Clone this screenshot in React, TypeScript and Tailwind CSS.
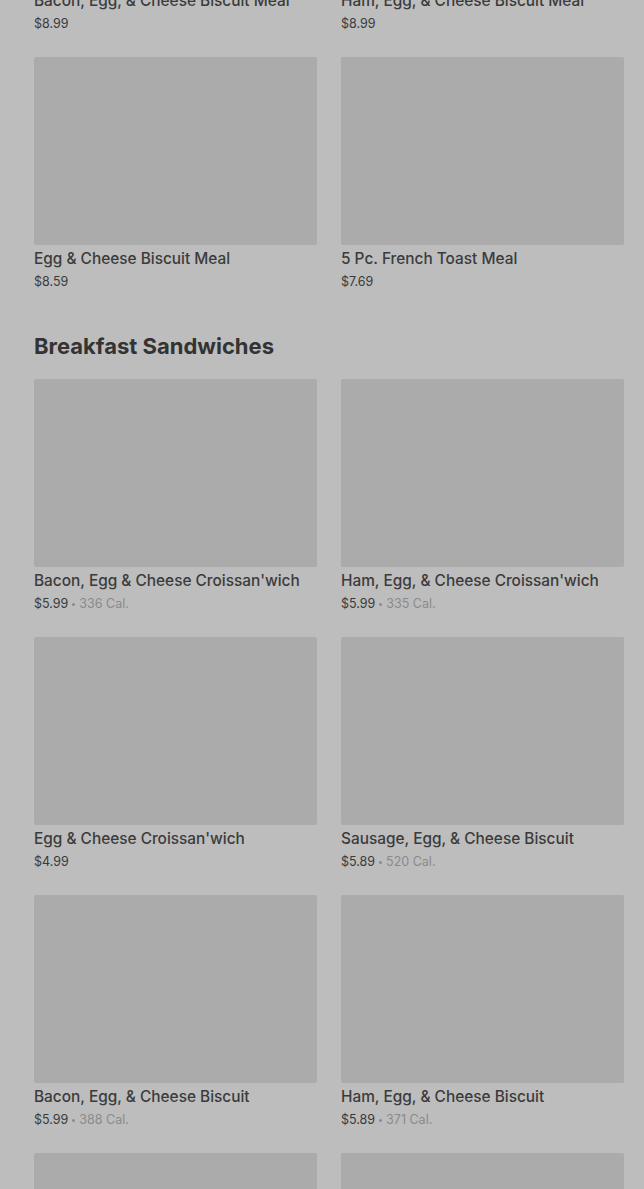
import React from "react";

type Item = { name?: string; price?: string; cal?: string };

const meals: Item[] = [
  { name: "Bacon, Egg, & Cheese Biscuit Meal", price: "$8.99" },
  { name: "Ham, Egg, & Cheese Biscuit Meal", price: "$8.99" },
  { name: "Egg & Cheese Biscuit Meal", price: "$8.59" },
  { name: "5 Pc. French Toast Meal", price: "$7.69" },
];

const sandwiches: Item[] = [
  { name: "Bacon, Egg & Cheese Croissan'wich", price: "$5.99", cal: "336 Cal." },
  { name: "Ham, Egg, & Cheese Croissan'wich", price: "$5.99", cal: "335 Cal." },
  { name: "Egg & Cheese Croissan'wich", price: "$4.99" },
  { name: "Sausage, Egg, & Cheese Biscuit", price: "$5.89", cal: "520 Cal." },
  { name: "Bacon, Egg, & Cheese Biscuit", price: "$5.99", cal: "388 Cal." },
  { name: "Ham, Egg, & Cheese Biscuit", price: "$5.89", cal: "371 Cal." },
  {},
  {},
];

function Card({ item }: { item: Item }) {
  return (
    <div className="flex flex-col">
      <div className="h-[188px] w-full rounded-[2px] bg-[#ababab]" />
      {item.name && (
        <>
          <div className="mt-[4px] h-[20px] text-[15.4px] leading-[20px] font-medium text-[#3b3b3b] whitespace-nowrap">
            {item.name}
          </div>
          <div className="mt-[4px] flex h-[18px] items-center text-[12.5px] leading-[18px] text-[#3a3a3a]">
            <span>{item.price}</span>
            {item.cal && (
              <>
                <span className="mx-[4px] h-[3px] w-[3px] rounded-full bg-[#8a8a8a]" />
                <span className="text-[#8a8a8a]">{item.cal}</span>
              </>
            )}
          </div>
        </>
      )}
    </div>
  );
}

export default function App() {
  return (
    <div
      className="h-[1189px] w-[644px] overflow-hidden bg-[#bdbdbd] pl-[34px] pr-[20px]"
      style={{ fontFamily: "Inter, 'Noto Sans', sans-serif" }}
    >
      <div className="-mt-[201px] grid grid-cols-2 gap-x-[24px] gap-y-[24px]">
        {meals.map((m, i) => (
          <Card key={i} item={m} />
        ))}
      </div>
      <h2 className="mt-[41px] mb-[19px] h-[28px] text-[22px] leading-[28px] font-bold text-[#333333]">
        Breakfast Sandwiches
      </h2>
      <div className="grid grid-cols-2 gap-x-[24px] gap-y-[24px]">
        {sandwiches.map((m, i) => (
          <Card key={i} item={m} />
        ))}
      </div>
    </div>
  );
}
